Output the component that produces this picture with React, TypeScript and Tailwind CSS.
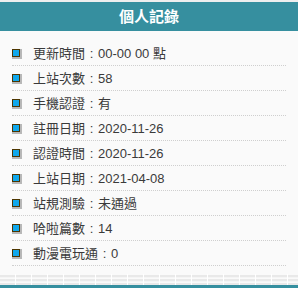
import React from 'react';

const rows: { label: string; value: string }[] = [
  { label: '更新時間', value: '00-00 00 點' },
  { label: '上站次數', value: '58' },
  { label: '手機認證', value: '有' },
  { label: '註冊日期', value: '2020-11-26' },
  { label: '認證時間', value: '2020-11-26' },
  { label: '上站日期', value: '2021-04-08' },
  { label: '站規測驗', value: '未通過' },
  { label: '哈啦篇數', value: '14' },
  { label: '動漫電玩通', value: '0' },
];

const Bullet: React.FC = () => (
  <span className="w-[8px] h-[8px] shrink-0 border border-[#4d3500] bg-[#10a8ec] shadow-[1px_1px_0_1px_#b8b8b8]" />
);

export default function App() {
  return (
    <div
      className="w-[298px] h-[288px] flex flex-col bg-[#f4f4f4] overflow-hidden"
      style={{ fontFamily: '"Liberation Sans", "Noto Sans CJK TC", sans-serif' }}
    >
      {/* top strip */}
      <div className="h-[2px] bg-[#eeeeee]" />

      {/* header */}
      <div className="h-[29px] bg-[#368f9f] flex items-center justify-center">
        <span className="text-white text-[15px] font-bold leading-none">個人記錄</span>
      </div>

      {/* body */}
      <div className="bg-[#fafafa] px-[12px] pt-[10px] pb-[8px]">
        {rows.map((r) => (
          <div
            key={r.label}
            className="h-[25px] flex items-center gap-[13px] border-b border-dotted border-[#cfcfcf] text-[13px] text-[#3a3a3a]"
          >
            <Bullet />
            <span className="leading-none flex items-center">
              <span>{r.label}</span>
              <span className="inline-block w-[13px] text-center">:</span>
              <span>{r.value}</span>
            </span>
          </div>
        ))}
      </div>

      {/* striped footer */}
      <div className="h-[11px] bg-[repeating-linear-gradient(to_bottom,#fafafa_0px,#fafafa_1px,#e9e9e9_1px,#e9e9e9_3px,#f5f5f5_3px,#f5f5f5_4px)] relative">
        <div className="absolute inset-0 bg-[repeating-linear-gradient(to_right,transparent_0px,transparent_15px,#ffffff_15px,#ffffff_16px)]" />
      </div>
      <div className="flex-1 bg-[#368f9f]" />
    </div>
  );
}
